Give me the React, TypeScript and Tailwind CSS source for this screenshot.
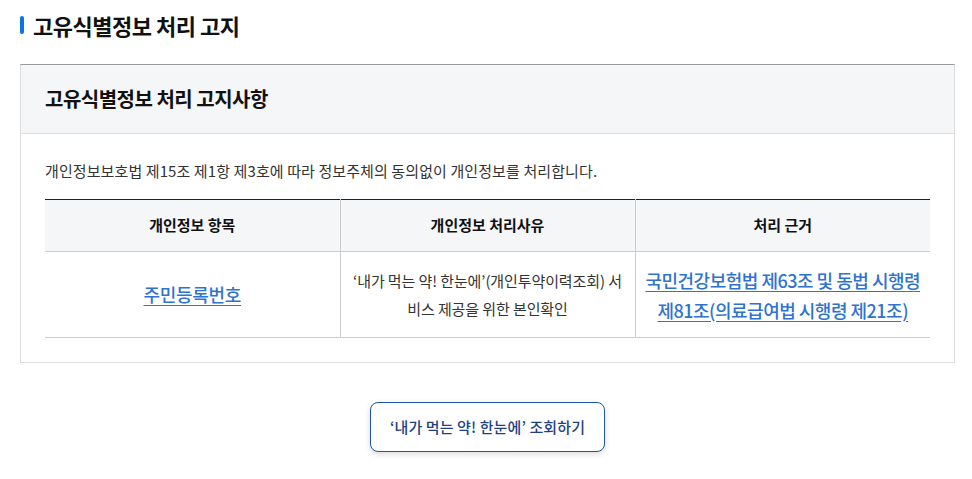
export default function App() {
  return (
    <div className="w-[972px] h-[479px] bg-white pl-5 pr-[17px] pt-[11px] text-[#333]" style={{ fontFamily: '"Noto Sans CJK KR", "Noto Sans", sans-serif' }}>
      <h2 className="flex items-center gap-[9px] h-[28px]">
        <span className="w-1 h-[18px] rounded-full bg-[#0a74e4]" />
        <span className="text-[22px] font-bold text-[#111] tracking-[-0.5px] leading-none">고유식별정보 처리 고지</span>
      </h2>

      <div className="mt-[25px] border border-[#ddd] border-t-[#999]">
        <div className="h-[69px] bg-[#f5f6f8] border-b border-[#ddd] flex items-center px-6">
          <h3 className="text-[20px] font-bold text-[#111] tracking-[-0.5px]">고유식별정보 처리 고지사항</h3>
        </div>
        <div className="px-6 pt-[26px] pb-6">
          <p className="text-[15px] leading-[22px] tracking-[0.1px] text-[#333]">개인정보보호법 제15조 제1항 제3호에 따라 정보주체의 동의없이 개인정보를 처리합니다.</p>
          <table className="mt-[17px] w-full border-collapse table-fixed border-t border-[#222]">
            <thead>
              <tr className="h-[52px] bg-[#f5f6f8] border-b border-[#ccc]">
                <th className="text-[15px] font-bold text-[#111] border-r border-[#ccc]">개인정보 항목</th>
                <th className="text-[15px] font-bold text-[#111] border-r border-[#ccc]">개인정보 처리사유</th>
                <th className="text-[15px] font-bold text-[#111]">처리 근거</th>
              </tr>
            </thead>
            <tbody>
              <tr className="h-[86px] border-b border-[#ccc]">
                <td className="text-center border-r border-[#ccc]">
                  <a href="#" className="text-[18px] font-medium text-[#2f73d0] underline underline-offset-[3px] tracking-[-0.3px]">주민등록번호</a>
                </td>
                <td className="text-center border-r border-[#ccc] px-[10px] text-[15px] leading-[28px] tracking-[-0.1px] text-[#333]">
                  ‘내가 먹는 약! 한눈에’(개인투약이력조회) 서비스 제공을 위한 본인확인
                </td>
                <td className="text-center px-[4px] break-keep">
                  <a href="#" className="text-[18px] font-medium leading-[30px] text-[#2f73d0] underline underline-offset-[3px] tracking-[-0.5px]">국민건강보험법 제63조 및 동법 시행령 제81조(의료급여법 시행령 제21조)</a>
                </td>
              </tr>
            </tbody>
          </table>
        </div>
      </div>

      <div className="flex justify-center mt-[39px]">
        <button className="w-[235px] h-[50px] rounded-[8px] border border-[#1d56a8] bg-white text-[15px] font-medium text-[#1d4284] tracking-[0.1px] shadow-[0_2px_6px_rgba(0,0,0,0.15)]">
          ‘내가 먹는 약! 한눈에’ 조회하기
        </button>
      </div>
    </div>
  );
}
